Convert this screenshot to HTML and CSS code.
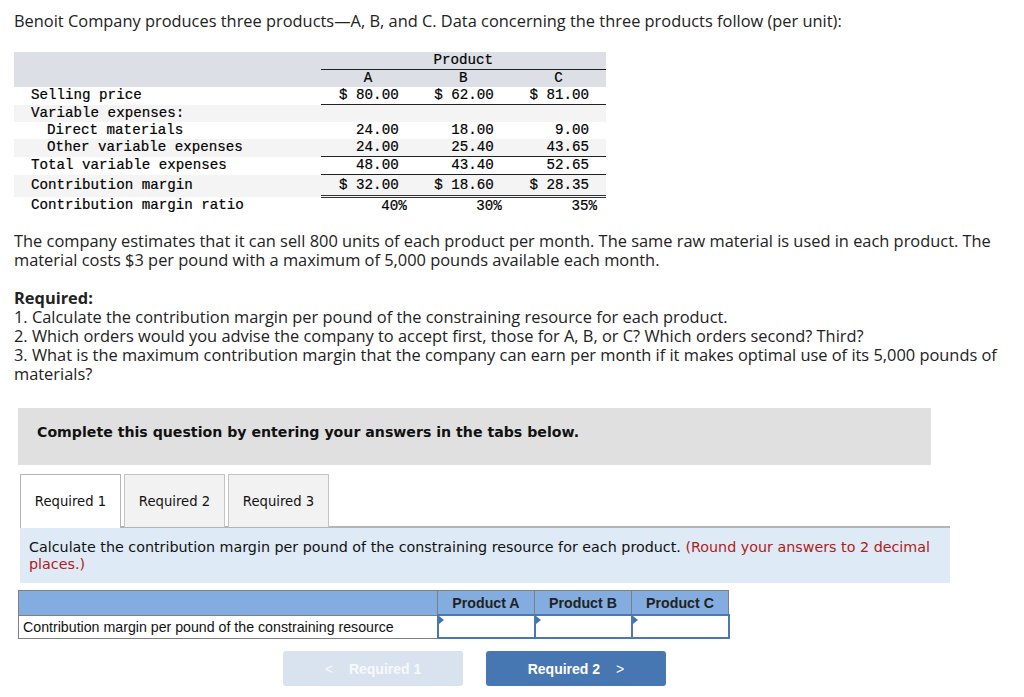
FILE: index.html
```html
<!DOCTYPE html>
<html>
<head>
<meta charset="utf-8">
<link rel="stylesheet" href="styles.css">
</head>
<body>
<p class="intro">Benoit Company produces three products—A, B, and C. Data concerning the three products follow (per unit):</p>

<table class="data">
  <colgroup><col class="c-label"><col class="c-num"><col class="c-num"><col class="c-num"></colgroup>
  <thead>
    <tr class="h1"><th></th><th colspan="3" class="prod">Product</th></tr>
    <tr class="h2"><th></th><th>A</th><th>B</th><th>C</th></tr>
  </thead>
  <tbody>
    <tr class="r u"><td>Selling price</td><td class="n ul">$ 80.00</td><td class="n ul">$ 62.00</td><td class="n ul">$ 81.00</td></tr>
    <tr class="r alt"><td>Variable expenses:</td><td></td><td></td><td></td></tr>
    <tr class="r"><td class="ind">Direct materials</td><td class="n">24.00</td><td class="n">18.00</td><td class="n">9.00</td></tr>
    <tr class="r alt u"><td class="ind">Other variable expenses</td><td class="n ul">24.00</td><td class="n ul">25.40</td><td class="n ul">43.65</td></tr>
    <tr class="r u"><td>Total variable expenses</td><td class="n ul">48.00</td><td class="n ul">43.40</td><td class="n ul">52.65</td></tr>
    <tr class="r alt tall"><td>Contribution margin</td><td class="n dbl">$ 32.00</td><td class="n dbl">$ 18.60</td><td class="n dbl">$ 28.35</td></tr>
    <tr class="r last"><td>Contribution margin ratio</td><td class="p">40%</td><td class="p">30%</td><td class="p">35%</td></tr>
  </tbody>
</table>

<p class="para">The company estimates that it can sell 800 units of each product per month. The same raw material is used in each product. The material costs $3 per pound with a maximum of 5,000 pounds available each month.</p>

<div class="req">
  <p class="req-title">Required:</p>
  <p>1. Calculate the contribution margin per pound of the constraining resource for each product.</p>
  <p>2. Which orders would you advise the company to accept first, those for A, B, or C? Which orders second? Third?</p>
  <p>3. What is the maximum contribution margin that the company can earn per month if it makes optimal use of its 5,000 pounds of materials?</p>
</div>

<div class="notice">Complete this question by entering your answers in the tabs below.</div>

<div class="tabs">
  <div class="tab active">Required 1</div>
  <div class="tab">Required 2</div>
  <div class="tab">Required 3</div>
</div>
<div class="panel">Calculate the contribution margin per pound of the constraining resource for each product. <span class="red">(Round your answers to 2 decimal places.)</span></div>

<table class="ans">
  <tr class="ah"><th class="al"></th><th>Product A</th><th>Product B</th><th>Product C</th></tr>
  <tr><td class="al">Contribution margin per pound of the constraining resource</td><td class="in"><span class="tri"></span></td><td class="in"><span class="tri"></span></td><td class="in"><span class="tri"></span></td></tr>
</table>

<div class="nav">
  <div class="btn prev"><span class="chev">&lt;</span>Required 1</div>
  <div class="btn next">Required 2<span class="chev r">&gt;</span></div>
</div>
</body>
</html>
```
FILE: styles.css
```css
html, body { margin: 0; padding: 0; background: #fff; }
body {
  padding: 0 14px;
  font-family: "Open Sans", "Liberation Sans", Arial, sans-serif;
  color: #222;
}
p { margin: 0; }
.intro { font-size: 16.4px; line-height: 19px; padding-top: 11px; }

.data {
  margin-top: 22px;
  width: 592px;
  border-collapse: collapse;
  font-family: "Liberation Mono", "Courier New", monospace;
  font-size: 14.2px;
  color: #000;
  -webkit-text-stroke: 0.2px #000;
}
.data .c-label { width: 306px; }
.data .c-num { width: 95px; }
.data th, .data td { padding: 0; white-space: pre; line-height: 17px; }
.data thead tr { background: #dce0e6; }
.data thead th { font-weight: normal; text-align: center; }
.data .h1 th { height: 16px; }
.data .prod { border-bottom: 1px solid #222; }
.data .h2 th { height: 17px; }
.data td:first-child { padding-left: 17px; }
.data td.ind { padding-left: 33px; }
.data .r td { height: 17px; }
.data .r.u td { height: 16px; }
.data .alt { background: #f4f4f4; }
.data .tall td { height: 20px; }
.data .last td { height: 19px; vertical-align: top; padding-top: 0; }
.data td.n { text-align: right; padding-right: 17px; }
.data td.p { text-align: right; padding-right: 9px; }
.data td.ul { border-bottom: 1px solid #222; }
.data td.dbl { border-bottom: 3px double #333; }

.para { margin-top: 14px; font-size: 16.4px; line-height: 19px; max-width: 985px; }
.req { margin-top: 19px; font-size: 16.4px; line-height: 19px; max-width: 985px; }
.req-title { font-weight: bold; }

.notice {
  margin: 25px 0 0 4px;
  width: 913px;
  height: 57px;
  box-sizing: border-box;
  padding: 16px 0 0 19px;
  background: #e0e0e0;
  font-family: "DejaVu Sans", Verdana, sans-serif;
  font-weight: bold;
  font-size: 14.15px;
  color: #111;
}

.tabs {
  display: flex;
  gap: 3px;
  margin: 9px 0 0 6px;
  width: 930px;
  border-bottom: 2px solid #b4b4b4;
}
.tab {
  width: 101px;
  height: 53px;
  box-sizing: border-box;
  border: 1px solid #c4c4c4;
  border-bottom: none;
  background: #f2f2f2;
  font-family: "DejaVu Sans", Verdana, sans-serif;
  font-size: 13.2px;
  color: #111;
  display: flex;
  align-items: center;
  justify-content: center;
  margin-bottom: -2px;
}
.tab.active { background: #fff; border-color: #b4b4b4; height: 54px; position: relative; z-index: 1; }

.panel {
  margin-left: 6px;
  width: 930px;
  box-sizing: border-box;
  background: #deeaf6;
  padding: 11px 9px;
  font-family: "DejaVu Sans", Verdana, sans-serif;
  font-size: 14.3px;
  line-height: 17px;
  color: #111;
  height: 55px;
}
.red { color: #b0201a; }

.ans {
  margin: 7px 0 0 4px;
  border-collapse: collapse;
  font-family: "Liberation Sans", Arial, sans-serif;
  font-size: 14.2px;
}
.ans th, .ans td { border: 1px solid #7f7f7f; padding: 0; }
.ans .ah th { background: #83ade0; height: 23px; font-weight: bold; color: #222; width: 96px; }
.ans th.al { width: 418px; }
.ans td.al { padding: 0 0 0 4px; height: 22px; color: #111; }
.ans td.in { border: 2px solid #4a78b4; position: relative; background: #fff; }
.tri {
  position: absolute; left: 0; top: 0;
  width: 0; height: 0;
  border-top: 4px solid transparent;
  border-bottom: 4px solid transparent;
  border-left: 5px solid #3f73b8;
}

.nav {
  display: flex;
  gap: 23px;
  margin: 12px 0 0 269px;
}
.btn {
  width: 180px;
  height: 35px;
  border-radius: 3px;
  display: flex;
  align-items: center;
  justify-content: center;
  font-family: "Liberation Sans", Arial, sans-serif;
  font-weight: bold;
  font-size: 14px;
  color: #fff;
}
.btn.prev { background: #d9e3ef; color: #f7f9fc; }
.btn.next { background: #4777b3; }
.chev { font-weight: normal; margin-right: 16px; }
.chev.r { margin: 0 0 0 16px; }
```
